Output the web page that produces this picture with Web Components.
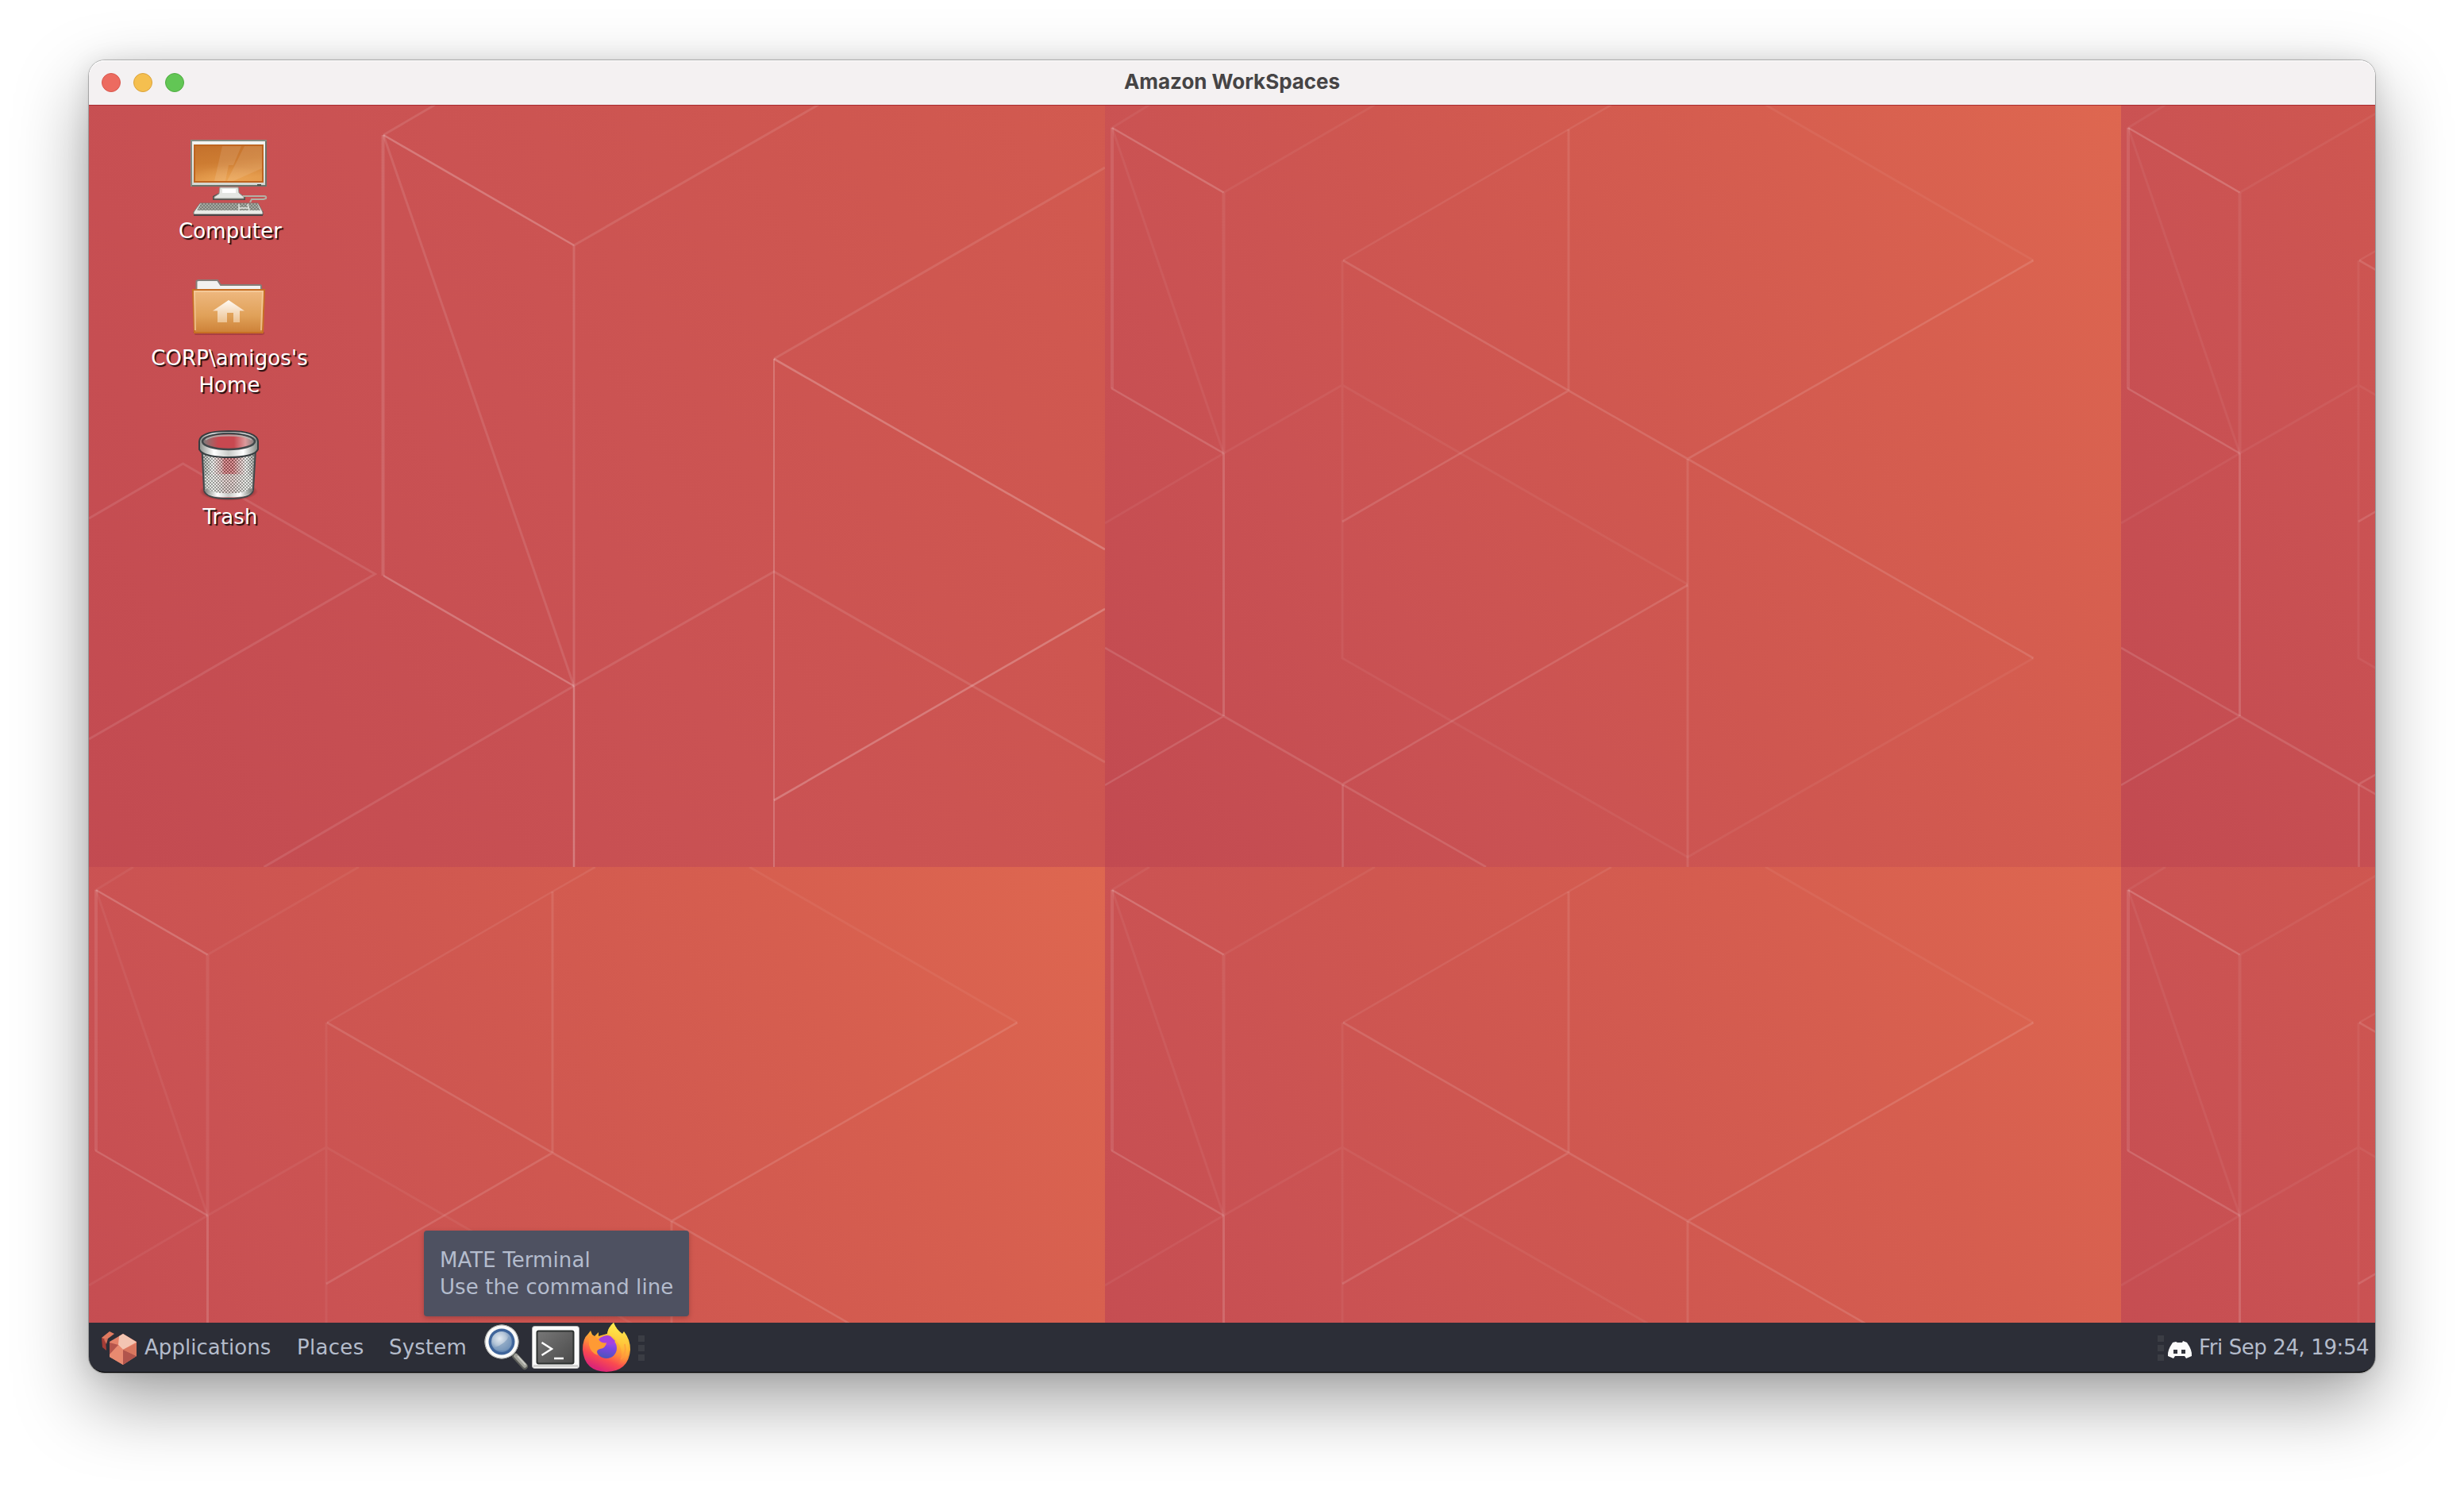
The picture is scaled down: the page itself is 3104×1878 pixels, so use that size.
<!DOCTYPE html>
<html lang="en">
<head>
<meta charset="utf-8">
<title>Amazon WorkSpaces</title>
<style>
html, body { margin: 0; height: 100%; background: #fff; overflow: hidden; }
body { box-sizing: border-box; height: 1878px; padding: 76px 112px 149px; font-family: "DejaVu Sans", sans-serif; font-size: 26px; line-height: 34px; }
</style>
</head>
<body>
<remote-window heading="Amazon WorkSpaces">
  <desk-wallpaper></desk-wallpaper>
  <desk-icons>
    <desk-icon kind="computer" label="Computer"></desk-icon>
    <desk-icon kind="home" label="CORP\amigos's Home"></desk-icon>
    <desk-icon kind="trash" label="Trash"></desk-icon>
  </desk-icons>
  <task-panel slot="panel">
    <panel-glyph kind="logo" style="width:56px"></panel-glyph>
    <panel-menu style="width:192px;letter-spacing:.05px">Applications</panel-menu>
    <panel-menu style="width:116px;letter-spacing:.3px">Places</panel-menu>
    <panel-menu style="width:114px;letter-spacing:.15px">System</panel-menu>
    <panel-glyph kind="search"></panel-glyph>
    <panel-glyph kind="terminal"></panel-glyph>
    <panel-glyph kind="firefox"></panel-glyph>
    <panel-grip style="margin-left:8px"></panel-grip>
    <panel-grip slot="tray"></panel-grip>
    <panel-glyph kind="discord" slot="tray" style="width:34px;margin:0 7px 0 3px"></panel-glyph>
    <panel-menu slot="tray" style="width:222px;letter-spacing:-.4px">Fri Sep 24, 19:54</panel-menu>
  </task-panel>
  <hover-tip slot="panel"><span slot="title">MATE Terminal</span><span slot="text">Use the command line</span></hover-tip>
</remote-window>

<script>
const define = (name, html, setup) => {
  const tpl = document.createElement('template');
  tpl.innerHTML = html;
  customElements.define(name, class extends HTMLElement {
    connectedCallback() {
      if (this.shadowRoot) return;
      this.attachShadow({ mode: 'open' }).append(tpl.content.cloneNode(true));
      if (setup) setup(this, this.shadowRoot);
    }
  });
};

define('remote-window', `
<style>
:host { display: grid; grid-template-rows: 56px 1534px 63px; height: 1653px; border-radius: 20px; position: relative;
  box-shadow: 0 0 0 1px rgba(0,0,0,.2), 0 0 3px rgba(0,0,0,.15), 0 36px 92px rgba(0,0,0,.37), 0 2px 30px rgba(0,0,0,.1); }
header { display: grid; grid-template-columns: 1fr auto 1fr; align-items: center; background: #f4f1f2; border-radius: 20px 20px 0 0;
  box-shadow: inset 0 1px #fff; box-sizing: border-box; }
.lights { display: flex; gap: 16px; padding-left: 16px; }
.lights i { width: 24px; height: 24px; border-radius: 50%; box-sizing: border-box; }
i:nth-child(1) { background: #ec6b60; border: 1px solid #d9584e; }
i:nth-child(2) { background: #f5bf4f; border: 1px solid #dba33c; }
i:nth-child(3) { background: #62c655; border: 1px solid #50ab42; }
h1 { margin: 0; padding-bottom: 2px; font: 700 26px/32px Inter, sans-serif; letter-spacing: -.03px; color: #464445; }
main { display: grid; overflow: hidden; position: relative; }
main ::slotted(*) { grid-area: 1 / 1; }
main::after { content: ""; grid-area: 1 / 1; height: 1px; background: #a02028; opacity: .8; align-self: start; z-index: 2; }
</style>
<header><div class="lights"><i></i><i></i><i></i></div><h1></h1><span></span></header>
<main><slot></slot></main>
<slot name="panel"></slot>`, (el, root) => { root.querySelector('h1').textContent = el.getAttribute('heading'); });

define('desk-wallpaper', `
<style>:host { display: block; } svg { display: block; } .l { fill: none; stroke: #fff; stroke-width: 2.6; }</style>
<svg width="2880" height="1534" viewBox="0 0 2880 1534">
<defs>
<linearGradient id="g" gradientUnits="userSpaceOnUse" x1="0" y1="960" x2="1347" y2="106">
<stop offset="0" stop-color="#c24a51"/><stop offset=".3" stop-color="#ca5253"/><stop offset=".5" stop-color="#cf5750"/><stop offset=".75" stop-color="#d65e4f"/><stop offset="1" stop-color="#de6750"/></linearGradient>
<linearGradient id="G" href="#g" x1="356" y1="1611" x2="2632" y2="168"/>
<clipPath id="c"><path d="M0 0H1280V960H0z"/></clipPath>
<g id="small" clip-path="url(#c)">
<path fill="url(#g)" d="M0 0H1280V960H0z"/>
<g class="l">
<path opacity=".19" d="M9 29L149.500 110.500"/>
<path opacity=".1" stroke-width="4" d="M9 29V357"/>
<path opacity=".15" d="M8 357L149.500 439"/>
<path opacity=".055" stroke-width="3" d="M149.500 439L9 29L56 0M149.500 110.500L340 0M0 527L149.500 439L299 353L734 604M299 196V697L734 947.500L1169.500 697M832 0L1169.500 196"/>
<path opacity=".075" stroke-width="4" d="M149.500 110.500V439"/>
<path opacity=".15" stroke-width="3" d="M149.500 439V770"/>
<path opacity=".125" d="M0 684L149.500 770L299 856L480 960M149.500 770L0 857M299 856L734 605M299 525L584 360M300 196L584 360L734 446L1169.500 697M734 446L1169.500 196"/>
<path opacity=".13" d="M299.500 856V960"/>
<path opacity=".075" d="M300 196L584 31L638 0"/>
<path opacity=".1" stroke-width="3" d="M584 31V360M734 446V960"/>
</g></g>
<g id="large" clip-path="url(#c)">
<path fill="url(#G)" d="M0 0H1280V960H0z"/>
<g class="l">
<path opacity=".23" d="M371 38L611 177M371 593L611 732M863 320L1280 560M863 876L1280 635"/>
<path opacity=".13" stroke-width="4" d="M370.500 38V593"/>
<path opacity=".105" stroke-width="3" d="M371 38L611 732M371 38L436 0M611 177L919 0M863 320L1280 79M0 521L118.500 452L360.500 591L0 799M611 732L220.500 960M611 732L863 588L1280 828"/>
<path opacity=".13" stroke-width="3" d="M611 177V732"/>
<path opacity=".25" stroke-width="2.500" d="M611 732V960"/>
<path opacity=".2" stroke-width="2" d="M863 320V960"/>
</g></g>
</defs>
<use href="#large"/>
<use href="#small" x="1280"/><use href="#small" x="2560"/>
<use href="#small" y="960"/><use href="#small" x="1280" y="960"/><use href="#small" x="2560" y="960"/>
</svg>`);

define('desk-icons', `
<style>:host { display: flex; flex-direction: column; gap: 28px; width: 352px; padding-top: 44px; align-items: center; z-index: 1; position: relative; }
::slotted(:nth-child(2)) { margin-bottom: 6px; }</style><slot></slot>`);

const deskArt = {
computer: `<defs>
<linearGradient id="s" x1="0" y1="0" x2=".2" y2="1"><stop offset="0" stop-color="#c4712c"/><stop offset=".5" stop-color="#cd7c32"/><stop offset="1" stop-color="#e39a4c"/></linearGradient>
<linearGradient id="f" x1="0" y1="0" x2="0" y2="1"><stop offset="0" stop-color="#f4f4f2"/><stop offset="1" stop-color="#d4d7d1"/></linearGradient>
<radialGradient id="r" cx=".5" cy="1" r=".6"><stop offset="0" stop-color="#f0aa58"/><stop offset="1" stop-color="#f0aa58" stop-opacity="0"/></radialGradient>
<pattern id="k" width="4" height="4" patternUnits="userSpaceOnUse"><path fill="#7d807a" d="M0 0H4V4H0z"/><path fill="#a4a79f" d="M0 0h2v2H0zM2 2h2v2H2z"/></pattern></defs>
<path fill="#6d2a2e" opacity=".45" d="M4 90h88v5H4z"/>
<path fill="url(#f)" stroke="#848a80" stroke-width="2" d="M1 1H95V58H1z"/>
<path d="M95 2V58H2" fill="none" stroke="#656a60" stroke-width="1.500"/>
<path fill="url(#s)" stroke="#be6420" stroke-width="2" d="M5 7H91V53H5z"/><path fill="url(#r)" opacity=".6" d="M6 20H90V52H6z"/>
<path fill="#fff" opacity=".11" d="M40 8H64L54 32H48L44 52H30zM68 8H90V36L54 52H46z"/>
<path fill="#4c504a" d="M84 56h5v2h-5z"/>
<path fill="#55504d" d="M28 71l8-4h25l8 5v4H28z"/><path fill="#e4e6e2" stroke="#9a9e97" d="M37 60H60L61 67L67 72V74H30V72L36 68z"/><path fill="#fff" d="M40 62h17v5H40z"/>
<path fill="none" stroke="#b2b0a4" stroke-width="2" d="M66 71H93Q96 71 95 74L92 75H77L75 79"/>
<path fill="#e8eae6" stroke="#757972" d="M12 80H85L91 91V94H4V91z"/><path fill="url(#k)" d="M13 80H84L88 89H8z"/><path stroke="#e4e6e2" stroke-width="1.500" d="M61 81V89M72 81L74 89M61 86H73"/><path stroke="#4d4547" stroke-width="2" d="M4 95H91"/>`,
home: `<defs>
<linearGradient id="o" x1="0" y1="0" x2="0" y2="1"><stop offset="0" stop-color="#efb981"/><stop offset=".6" stop-color="#e0a159"/><stop offset="1" stop-color="#cd8137"/></linearGradient>
<linearGradient id="h" x1="0" y1="0" x2="0" y2="1"><stop offset="0" stop-color="#fffaf4"/><stop offset="1" stop-color="#ecc292"/></linearGradient></defs>
<path fill="#7c292d" opacity=".4" d="M3 82h90v3l-3 1H6z"/>
<path fill="#f2f1f0" stroke="#857e79" stroke-width="2" d="M7.500 30V18l2-1H34l4 6H88l1 1v6z"/>
<path fill="url(#o)" stroke="#c76f24" stroke-width="2" d="M3 29H93L91 83H5z"/>
<path fill="none" stroke="#f6cfa3" stroke-width="2" opacity=".7" d="M6 80L5 31H91L89 80"/>
<path fill="url(#h)" d="M48 42L68 55.500H62V70H54V58H46V70H34V55.500H28z"/>`,
trash: `<defs>
<pattern id="m" width="4" height="4" patternUnits="userSpaceOnUse"><path fill="#fff" opacity=".65" d="M0 0h2v2H0zM2 2h2v2H2z"/><path fill="#555a55" opacity=".75" d="M2 0h2v2H2zM0 2h2v2H0z"/></pattern>
<linearGradient id="b"><stop offset="0" stop-color="#777b77"/><stop offset=".2" stop-color="#e8e8e6"/><stop offset=".36" stop-color="#dcc4c4" stop-opacity=".6"/><stop offset=".42" stop-color="#c54048" stop-opacity=".6"/><stop offset=".58" stop-color="#c54048" stop-opacity=".6"/><stop offset=".68" stop-color="#dcc4c4" stop-opacity=".6"/><stop offset=".82" stop-color="#e8e8e6"/><stop offset="1" stop-color="#6d716d"/></linearGradient>
<linearGradient id="w"><stop offset="0" stop-color="#8a8e89"/><stop offset=".25" stop-color="#fff"/><stop offset=".5" stop-color="#c9cbc8"/><stop offset=".75" stop-color="#fff"/><stop offset="1" stop-color="#7f847f"/></linearGradient>
<linearGradient id="i"><stop offset="0" stop-color="#7d7f7d"/><stop offset=".3" stop-color="#c84850"/><stop offset=".6" stop-color="#c84850"/><stop offset=".82" stop-color="#dc9a9c"/><stop offset="1" stop-color="#7d7f7d"/></linearGradient>
<radialGradient id="d"><stop offset=".6" stop-color="#3b1517" stop-opacity=".7"/><stop offset="1" stop-color="#3b1517" stop-opacity="0"/></radialGradient></defs>
<g transform="translate(0 1)">
<ellipse cx="48" cy="82" rx="37" ry="12" fill="url(#d)"/>
<path fill="url(#b)" stroke="#41474a" stroke-width="2" d="M14.500 30L17 80Q18 91 48 91T79 80L82 30z"/>
<path fill="#d8dad5" opacity=".75" d="M18 62Q48 58 78 62L77 80Q70 88 48 88T19 80z"/>
<path fill="url(#m)" opacity=".65" d="M16 36H80L77 80Q70 85 48 85T19 80z"/>
<path fill="none" stroke="url(#w)" stroke-width="5" d="M19.500 79Q24 87 48 87T76.500 79"/>
<path fill="url(#w)" stroke="#373d40" stroke-width="2" d="M11 19Q12 6 48 6T85 19V29Q80 39 48 39T11 29z"/>
<ellipse cx="48" cy="19" rx="33" ry="10" fill="url(#i)" stroke="#42474a" stroke-width="2.500"/>
<path fill="none" stroke="#b6b9b5" stroke-width="2" opacity=".8" d="M19 17Q26 11.500 48 11.500T77 17"/></g>`};

define('desk-icon', `
<style>:host { display: flex; flex-direction: column; align-items: center; gap: 2px; width: 208px; }
svg { display: block; overflow: visible; } span { color: #fff; text-align: center; padding-left: 4px; letter-spacing: .1px; text-shadow: 2px 2px 1px rgba(0,0,0,.85); }
:host([kind=home]) span { padding-left: 2px; }</style>
<svg width="96" height="96" viewBox="0 0 96 96"></svg><span></span>`, (el, root) => {
  root.querySelector('svg').innerHTML = deskArt[el.getAttribute('kind')];
  root.querySelector('span').textContent = el.getAttribute('label');
});

define('task-panel', `
<style>:host { display: flex; justify-content: space-between; box-sizing: border-box; height: 63px; border-bottom: 1px solid #000; background: #2c2e37; border-radius: 0 0 20px 20px; padding: 0 0 0 14px; overflow: hidden; }
div { display: flex; align-items: center; height: 62px; }</style>
<div><slot></slot></div><div><slot name="tray"></slot></div>`);

define('panel-menu', `<style>:host { display: block; color: #b4bccb; white-space: nowrap; }</style><slot></slot>`);

define('panel-grip', `<style>:host { display: grid; gap: 4px; width: 8px; padding-top: 2px; } i { height: 8px; background: #3b3d44; }</style><i></i><i></i><i></i>`);

const panelArt = {
logo: [56, `<path fill="#e07a60" d="M2 19L12 11L18 14L10 20L5 22z"/><path fill="#a43c36" d="M2 19L7 21L8 35L3 31z"/><path fill="#d6705a" d="M5 21L10 20L8 27z"/>
<path fill="#e5826a" d="M29 14L46 24V42L29 53L12 43V24z"/><path fill="#f3c5b2" d="M29 14L46 24.500L29 34L23 28L24 17z"/><path fill="#b5554c" d="M12 25L23 28L24 31L12 41z"/><path fill="#e88a70" d="M23 28L29 34V53L12 43V40z"/><path fill="#b1544c" d="M29 34L46 42L29 53z"/><path fill="#d9775f" d="M46 26V42L29 34z"/>`],
search: [64, `<defs><radialGradient id="l" cx=".4" cy=".35" r=".6"><stop offset="0" stop-color="#e4ebf2"/><stop offset=".55" stop-color="#b3c4d6"/><stop offset="1" stop-color="#6689b4"/></radialGradient></defs>
<path stroke="#5c5e5a" stroke-width="8" stroke-linecap="round" d="M45 42L57 55"/><path stroke="#a2a39b" stroke-width="5.500" stroke-linecap="round" d="M46 42L57 54"/><path stroke="#c9cac3" stroke-width="2" d="M48 42L58 53"/>
<circle cx="28" cy="24" r="21.500" fill="#fbfbfa"/><circle cx="28" cy="24" r="21" fill="none" stroke="#aaaca9"/><circle cx="28" cy="24" r="16.500" fill="#3f659b"/><circle cx="28" cy="24" r="13" fill="url(#l)"/><path fill="#7f9cbd" opacity=".7" d="M37 17Q34 26 18 32Q34 40 40 28Q41 22 37 17z"/>`],
terminal: [64, `<defs><linearGradient id="t" x1="0" y1="0" x2="1" y2="1"><stop offset="0" stop-color="#777"/><stop offset="1" stop-color="#4a4a4a"/></linearGradient></defs>
<rect x="2.500" y="4.500" width="59" height="53" rx="3" fill="#fafafa" stroke="#b5b5b5"/><path fill="#d4d4d3" d="M4 53H60V56H4z"/>
<rect x="8.500" y="10.500" width="46" height="41" rx="2" fill="url(#t)" stroke="#2c302f" stroke-width="2"/>
<path fill="none" stroke="#fff" stroke-width="2.500" d="M14.500 25L27 33L14.500 41"/><path stroke="#fff" stroke-width="2.500" d="M30 45H42"/>`],
firefox: [64, `<defs><linearGradient id="x" x1=".75" y1=".1" x2=".35" y2="1"><stop offset="0" stop-color="#ffe94f"/><stop offset=".3" stop-color="#ffb733"/><stop offset=".52" stop-color="#ff8a3a"/><stop offset=".72" stop-color="#fa4a50"/><stop offset=".95" stop-color="#dd2676"/></linearGradient>
<linearGradient id="y" x1=".6" y1="0" x2=".5" y2="1"><stop offset="0" stop-color="#fff44f"/><stop offset=".5" stop-color="#ffc43a"/><stop offset="1" stop-color="#ff8a3a" stop-opacity="0"/></linearGradient>
<linearGradient id="z" x1=".6" y1="0" x2=".4" y2="1"><stop offset="0" stop-color="#b64be8"/><stop offset=".5" stop-color="#7b45e0"/><stop offset="1" stop-color="#4a55b8"/></linearGradient></defs>
<path fill="url(#x)" d="M2 34Q2 20 9 14L12 10L14 15L17 17L22 12V17Q28 15 33 14Q34 6 41 0Q44 8 52 14L54 11Q62 21 62 34Q60 61 32 62Q4 61 2 34z"/>
<path fill="url(#y)" d="M41 0Q44 8 51 15Q61 24 59 41Q55 54 46 54Q54 43 49 29L42 19L33 14Q34 6 41 0z"/>
<circle cx="32" cy="32" r="13" fill="url(#z)"/><path fill="#a640df" d="M22 21Q30 14 37 17L43 23L40 27L30 29z"/>
<path fill="#ff9a34" d="M10 16Q20 16 22 22Q28 27 32 25Q31 32 24 33Q18 34 21 41Q12 38 10 28z"/>
<path fill="none" stroke="#ff9b3d" stroke-width="2" opacity=".7" d="M55 27Q58 39 50 46"/>`],
discord: [34, `<path fill="#fbfbfb" d="M12 24L8 25Q1 35 2 42L9 45L11 42H23L25 45L32 42Q33 35 26 25L21 23L20 25H14z"/><path fill="#34363e" d="M9 34h5v5H9zM19 34h5v5h-5z"/>`]};

define('panel-glyph', `<style>:host { display: block; width: 64px; height: 62px; } svg { display: block; }</style><svg height="62"></svg>`, (el, root) => {
  const [w, art] = panelArt[el.getAttribute('kind')];
  const svg = root.querySelector('svg');
  svg.setAttribute('width', w);
  svg.setAttribute('viewBox', '0 0 ' + w + ' 62');
  svg.innerHTML = art;
});

define('hover-tip', `
<style>:host { position: absolute; left: 422px; top: 1474px; box-sizing: border-box; width: 334px; height: 108px; padding: 20px 20px 0; border-radius: 4px; background: #4e5161; color: #b4bccd; letter-spacing: .08px; box-shadow: 0 2px 6px rgba(0,0,0,.22); display: flex; flex-direction: column; white-space: nowrap; }</style>
<slot name="title"></slot><slot name="text"></slot>`);
</script>
</body>
</html>
